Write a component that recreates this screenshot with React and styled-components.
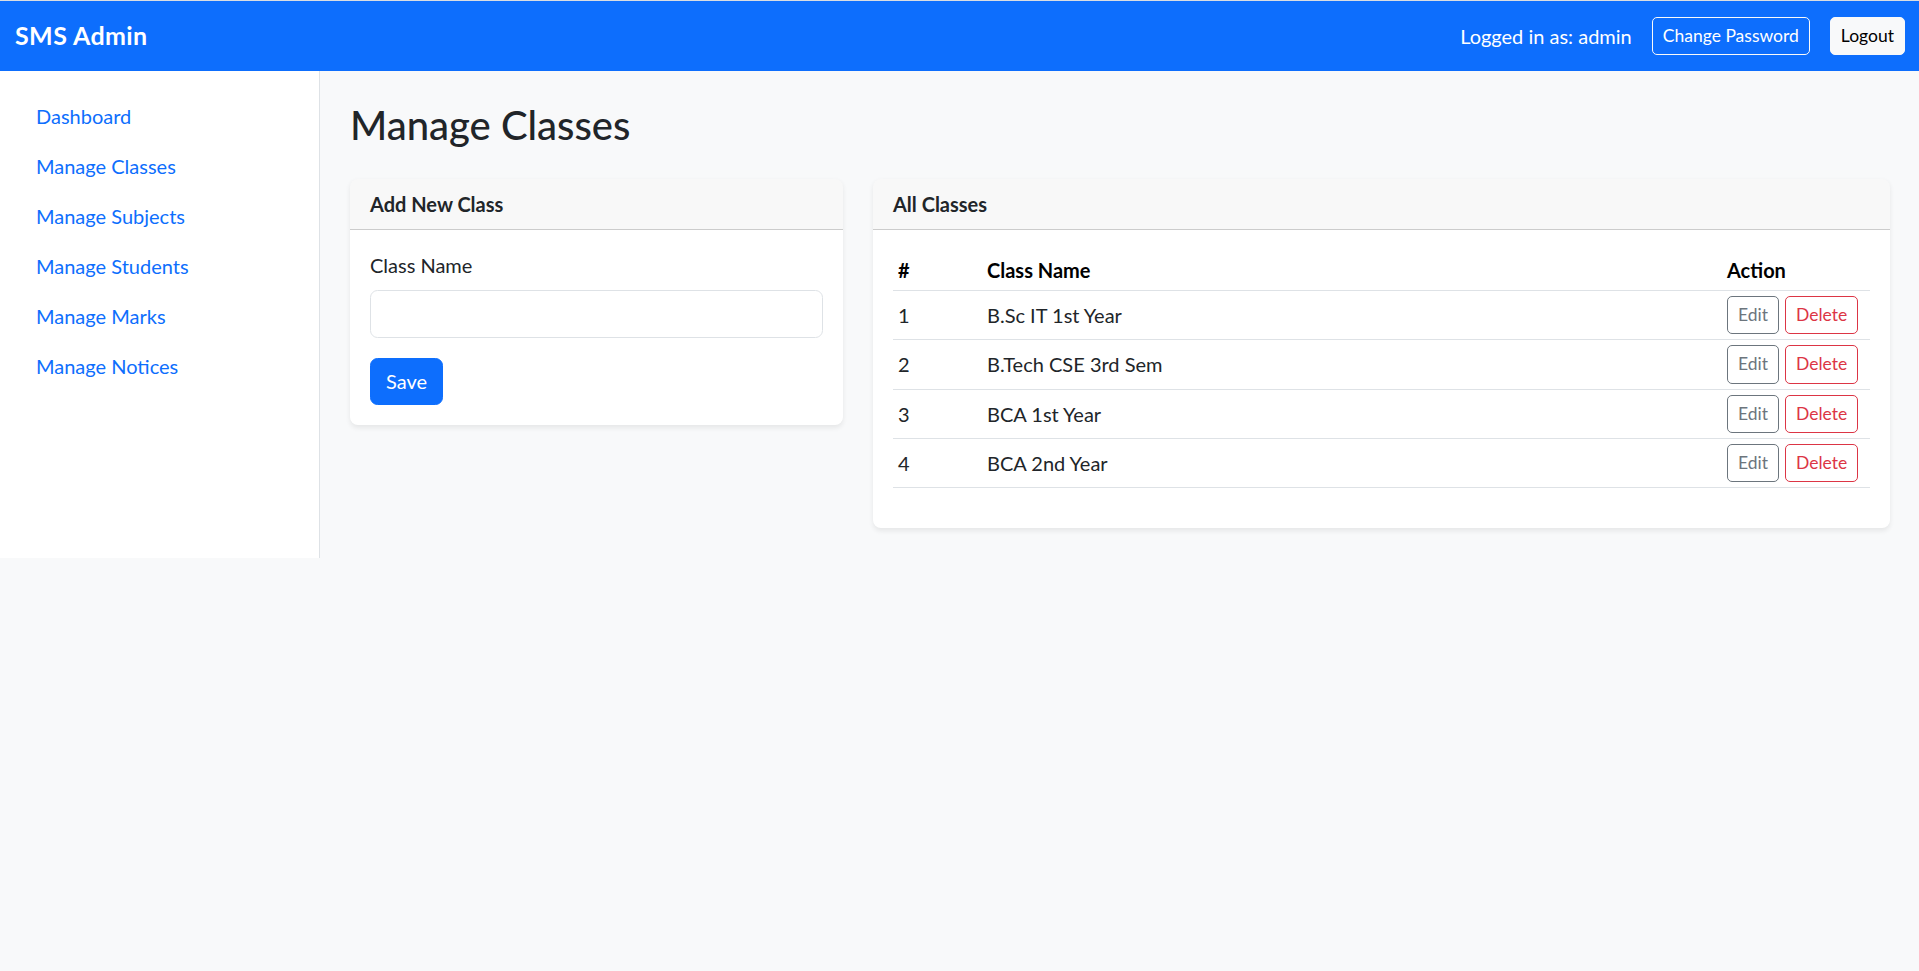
import React, { useState } from "react";
import styled, { createGlobalStyle, css } from "styled-components";

const GlobalStyle = createGlobalStyle`
    *, *::before, *::after { box-sizing: border-box; }
    body {
        margin: 0;
        background: #f8f9fa;
        color: #212529;
        font-family: Lato, "Liberation Sans", sans-serif;
        font-size: 20px;
        line-height: 1.5;
    }
`;

const classesSeed = [
    { id: 1, name: "B.Sc IT 1st Year" },
    { id: 2, name: "B.Tech CSE 3rd Sem" },
    { id: 3, name: "BCA 1st Year" },
    { id: 4, name: "BCA 2nd Year" },
];

const menu = ["Dashboard", "Manage Classes", "Manage Subjects", "Manage Students", "Manage Marks", "Manage Notices"];

const variants = {
    outlineLight: css`
        color: #fff;
        border-color: #f8f9fa;
        background: transparent;
    `,
    light: css`
        color: #000;
        border-color: #f8f9fa;
        background: #f8f9fa;
    `,
    outlineSecondary: css`
        color: #6c757d;
        border-color: #6c757d;
        background: transparent;
    `,
    outlineDanger: css`
        color: #dc3545;
        border-color: #dc3545;
        background: transparent;
    `,
};

const Navbar = () => (
    <NavBar>
        <Brand>SMS Admin</Brand>
        <NavRight>
            <UserText>Logged in as: admin</UserText>
            <SmallButton $variant="outlineLight">Change Password</SmallButton>
            <SmallButton $variant="light">Logout</SmallButton>
        </NavRight>
    </NavBar>
);

const App = () => {
    const [classes] = useState(classesSeed);
    const [className, setClassName] = useState("");

    return (
        <>
            <GlobalStyle />
            <Navbar />
            <Shell>
                <Sidebar>
                    {menu.map((item) => (
                        <SideLink key={item} href="#">{item}</SideLink>
                    ))}
                </Sidebar>
                <Main>
                    <Title>Manage Classes</Title>
                    <Columns>
                        <Card>
                            <CardHeader>Add New Class</CardHeader>
                            <CardBody>
                                <Label htmlFor="className">Class Name</Label>
                                <Input id="className" value={className} onChange={(e) => setClassName(e.target.value)} />
                                <SaveButton>Save</SaveButton>
                            </CardBody>
                        </Card>
                        <Card>
                            <CardHeader>All Classes</CardHeader>
                            <CardBody>
                                <Table>
                                    <thead>
                                        <tr>
                                            <Th $width="89px">#</Th>
                                            <Th>Class Name</Th>
                                            <Th $width="148px">Action</Th>
                                        </tr>
                                    </thead>
                                    <tbody>
                                        {classes.map((c) => (
                                            <tr key={c.id}>
                                                <Td>{c.id}</Td>
                                                <Td>{c.name}</Td>
                                                <Td>
                                                    <Actions>
                                                        <SmallButton $variant="outlineSecondary">Edit</SmallButton>
                                                        <SmallButton $variant="outlineDanger">Delete</SmallButton>
                                                    </Actions>
                                                </Td>
                                            </tr>
                                        ))}
                                    </tbody>
                                </Table>
                            </CardBody>
                        </Card>
                    </Columns>
                </Main>
            </Shell>
        </>
    );
};

const NavBar = styled.nav`
    height: 71px;
    border-top: 1px solid #d9dde2;
    background: #0d6efd;
    padding: 0 14px 0 15px;
    display: flex;
    align-items: center;
    justify-content: space-between;
`;

const Brand = styled.a`
    color: #fff;
    font-size: 25px;
    font-weight: 700;
    line-height: 1.5;
    letter-spacing: 0.4px;
`;

const NavRight = styled.div`
    display: flex;
    align-items: center;
    gap: 20px;
`;

const UserText = styled.span`
    color: #fff;
    font-size: 20px;
`;

const SmallButton = styled.button`
    font-family: inherit;
    font-size: 17.5px;
    line-height: 1.5;
    padding: 5px 10px;
    border: 1px solid;
    border-radius: 5px;
    cursor: pointer;
    ${({ $variant }) => variants[$variant]}
`;

const Shell = styled.div`
    display: flex;
    align-items: stretch;
`;

const Sidebar = styled.aside`
    width: 320px;
    flex-shrink: 0;
    background: #fff;
    border-right: 1px solid #dee2e6;
    padding: 20px 0 20px 20px;
    display: flex;
    flex-direction: column;
`;

const SideLink = styled.a`
    color: #0d6efd;
    text-decoration: none;
    padding: 10px 16px;
    font-size: 20px;
`;

const Main = styled.main`
    flex: 1;
    padding: 30px 29px 30px 30px;
`;

const Title = styled.h2`
    margin: 0 0 30px;
    font-size: 40px;
    font-weight: 500;
    line-height: 1.2;
`;

const Columns = styled.div`
    display: grid;
    grid-template-columns: 493fr 1017fr;
    gap: 30px;
    align-items: start;
`;

const Card = styled.section`
    background: #fff;
    border-radius: 8px;
    box-shadow: 0 2.5px 5px rgba(0, 0, 0, 0.075);
    overflow: hidden;
`;

const CardHeader = styled.div`
    padding: 10px 20px;
    background: rgba(33, 37, 41, 0.03);
    border-bottom: 1px solid rgba(0, 0, 0, 0.175);
    font-weight: 700;
    line-height: 1.5;
`;

const CardBody = styled.div`
    padding: 20px;
`;

const Label = styled.label`
    display: block;
    margin-bottom: 10px;
`;

const Input = styled.input`
    display: block;
    width: 100%;
    height: 47.5px;
    margin-bottom: 20px;
    padding: 7.5px 15px;
    font: inherit;
    border: 1px solid #dee2e6;
    border-radius: 7.5px;
    outline: none;
`;

const SaveButton = styled.button`
    font-family: inherit;
    font-size: 20px;
    line-height: 1.5;
    padding: 7.5px 15px;
    color: #fff;
    background: #0d6efd;
    border: 1px solid #0d6efd;
    border-radius: 7.5px;
    cursor: pointer;
`;

const Table = styled.table`
    width: 100%;
    border-collapse: collapse;
    margin-bottom: 20px;
`;

const Th = styled.th`
    width: ${({ $width }) => $width || "auto"};
    text-align: left;
    padding: 5px;
    font-weight: 700;
    color: #000;
    vertical-align: bottom;
    border-bottom: 1px solid #dee2e6;
`;

const Td = styled.td`
    padding: 5px;
    vertical-align: middle;
    border-bottom: 1px solid #dee2e6;
`;

const Actions = styled.div`
    display: flex;
    gap: 6px;
`;

export default App;
